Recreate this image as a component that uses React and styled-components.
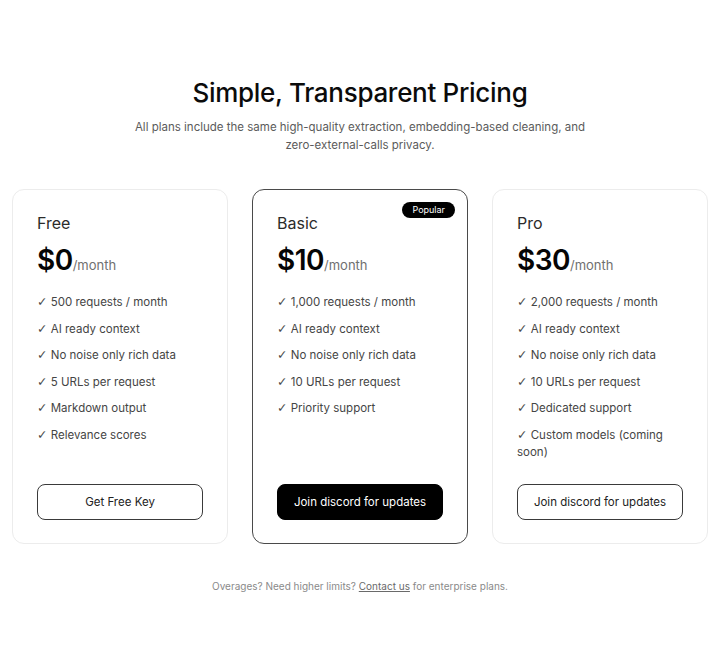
import React from "react";
import styled, { createGlobalStyle } from "styled-components";

const GlobalStyle = createGlobalStyle`
  body {
    margin: 0;
    background: #ffffff;
    font-family: Inter, "Noto Sans", "Liberation Sans", sans-serif;
    color: #111;
  }
`;

const Page = styled.section`
  padding: 75px 12px 40px;
  display: flex;
  flex-direction: column;
  align-items: center;
`;

const Heading = styled.h1`
  margin: 0;
  font-size: 26px;
  line-height: 36px;
  font-weight: 500;
  letter-spacing: -0.3px;
  color: #0b0b0b;
`;

const Subtitle = styled.p`
  margin: 7px 0 0;
  max-width: 460px;
  text-align: center;
  font-size: 11.5px;
  line-height: 18px;
  color: #5b5b5b;
`;

const Grid = styled.div`
  margin-top: 35px;
  width: 100%;
  display: grid;
  grid-template-columns: repeat(3, 1fr);
  gap: 24px;
`;

const Card = styled.div`
  position: relative;
  display: flex;
  flex-direction: column;
  padding: 23px 24px 23px;
  border-radius: 12px;
  border: 1px solid ${(p) => (p.$featured ? "#4a4a4a" : "#ececec")};
  background: #fff;
`;

const Badge = styled.span`
  position: absolute;
  top: 12px;
  right: 12px;
  background: #000;
  color: #fff;
  font-size: 9px;
  line-height: 16px;
  padding: 0 10px;
  border-radius: 999px;
`;

const PlanName = styled.div`
  font-size: 16px;
  line-height: 20px;
  color: #2b2b2b;
`;

const PriceRow = styled.div`
  margin-top: 10px;
  display: flex;
  align-items: baseline;
`;

const Amount = styled.span`
  font-size: 28px;
  line-height: 34px;
  font-weight: 600;
  letter-spacing: -0.5px;
  color: #050505;
`;

const Period = styled.span`
  font-size: 13px;
  color: #707070;
`;

const Features = styled.ul`
  list-style: none;
  margin: 17px 0 0;
  padding: 0;
  display: flex;
  flex-direction: column;
  gap: 9.6px;
`;

const Feature = styled.li`
  font-size: 11.5px;
  line-height: 17px;
  color: #454545;
`;

const Check = styled.span`
  font-family: "DejaVu Sans", sans-serif;
  font-size: 12.5px;
  line-height: 1;
  color: #4a4a4a;
`;

const ActionWrap = styled.div`
  margin-top: auto;
  padding-top: 23px;
  display: flex;
`;

const Action = styled.button`
  height: 36px;
  width: 100%;
  border-radius: 8px;
  font-family: inherit;
  font-size: 11.5px;
  cursor: pointer;
  border: 1px solid ${(p) => (p.$solid ? "#000" : "#3a3a3a")};
  background: ${(p) => (p.$solid ? "#000" : "#fff")};
  color: ${(p) => (p.$solid ? "#fff" : "#222")};
`;

const Footnote = styled.p`
  margin: 35px 0 0;
  font-size: 10px;
  line-height: 14px;
  color: #8a8a8a;

  a {
    color: #6a6a6a;
    text-decoration: underline;
  }
`;

const plans = [
  {
    name: "Free",
    price: "$0",
    features: [
      "500 requests / month",
      "AI ready context",
      "No noise only rich data",
      "5 URLs per request",
      "Markdown output",
      "Relevance scores",
    ],
    cta: "Get Free Key",
  },
  {
    name: "Basic",
    price: "$10",
    featured: true,
    features: [
      "1,000 requests / month",
      "AI ready context",
      "No noise only rich data",
      "10 URLs per request",
      "Priority support",
    ],
    cta: "Join discord for updates",
  },
  {
    name: "Pro",
    price: "$30",
    features: [
      "2,000 requests / month",
      "AI ready context",
      "No noise only rich data",
      "10 URLs per request",
      "Dedicated support",
      "Custom models (coming soon)",
    ],
    cta: "Join discord for updates",
  },
];

export default function App() {
  return (
    <>
      <GlobalStyle />
      <Page>
        <Heading>Simple, Transparent Pricing</Heading>
        <Subtitle>
          All plans include the same high-quality extraction, embedding-based cleaning, and
          zero-external-calls privacy.
        </Subtitle>
        <Grid>
          {plans.map((plan) => (
            <Card key={plan.name} $featured={plan.featured}>
              {plan.featured && <Badge>Popular</Badge>}
              <PlanName>{plan.name}</PlanName>
              <PriceRow>
                <Amount>{plan.price}</Amount>
                <Period>/month</Period>
              </PriceRow>
              <Features>
                {plan.features.map((f) => (
                  <Feature key={f}>
                    <Check>✓</Check> {f}
                  </Feature>
                ))}
              </Features>
              <ActionWrap>
                <Action $solid={plan.featured}>{plan.cta}</Action>
              </ActionWrap>
            </Card>
          ))}
        </Grid>
        <Footnote>
          Overages? Need higher limits? <a href="#contact">Contact us</a> for enterprise plans.
        </Footnote>
      </Page>
    </>
  );
}
